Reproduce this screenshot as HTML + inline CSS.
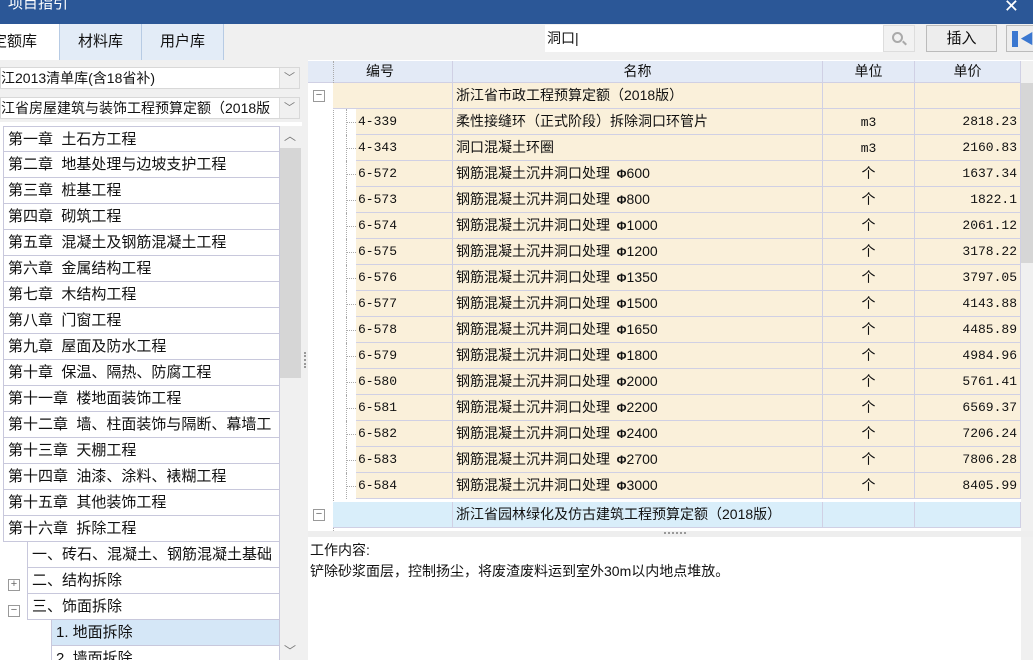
<!DOCTYPE html>
<html><head><meta charset="utf-8"><style>
*{box-sizing:border-box;margin:0;padding:0}
html{width:1033px;height:660px;overflow:hidden}
body{width:1033px;height:660px;overflow:hidden;background:#f0f0f0;position:relative;font-family:"Liberation Sans","Noto Sans CJK SC",sans-serif;font-size:14px;color:#111}
.a{position:absolute}
.title{left:0;top:0;width:1033px;height:24px;background:#2b5797;color:#fff;font-size:15px;overflow:hidden}
.tab{top:24px;height:36px;line-height:36px;text-align:center;font-size:15px;border-right:1px solid #b7cbe4}
.combo{left:0;width:300px;height:22px;background:#fff;border:1px solid #d8d8d8;line-height:20px;font-size:14px;white-space:nowrap;overflow:hidden}
.combo .dd{position:absolute;right:0;top:0;width:20px;height:20px;background:#f0f0f0;border-left:1px solid #ddd;text-align:center;color:#777;font-size:11px}
.li{left:3px;width:277px;height:26px;border:1px solid #c8c8dc;border-top:none;background:#fff;line-height:25px;padding-left:4px;font-size:15px;white-space:nowrap;overflow:hidden}
.row{left:0;width:1021px;height:26px}
.c{position:absolute;top:0;height:26px;border-right:1px solid #d0d0e4;border-bottom:1px solid #d0d0e4;line-height:25px;white-space:nowrap;overflow:hidden}
.mono{font-family:"Liberation Mono","Noto Sans CJK SC",monospace;font-size:13px}
.h{background:#e3eaf6;text-align:center;font-size:14px;height:22px;line-height:21px}
.pm{position:absolute;width:12px;height:12px;border:1px solid #999;background:#fff;font-size:11px;line-height:9px;text-align:center;color:#666}
</style></head><body>
<div class="a title"><span style="position:absolute;left:8px;top:-8px">项目指引</span><span style="position:absolute;right:14px;top:-4px;font-size:18px">✕</span></div>
<div class="a" style="left:-8px;top:24px;height:36px;line-height:36px;font-size:15px;background:#fff;width:68px;border-right:1px solid #b7cbe4">定额库</div>
<div class="a tab" style="left:60px;width:82px;background:#e3ecf7">材料库</div>
<div class="a tab" style="left:142px;width:82px;background:#e3ecf7">用户库</div>
<div class="a" style="left:545px;top:25px;width:338px;height:27px;background:#fff;line-height:26px;padding-left:2px;font-size:14px">洞口|</div>
<div class="a" style="left:883px;top:25px;width:32px;height:27px;background:#f2f2f2;border:1px solid #ddd"><div class="a" style="left:8px;top:6px;width:11px;height:11px;border:2px solid #aaa;border-radius:50%"></div><div class="a" style="left:18px;top:16px;width:5px;height:2px;background:#aaa;transform:rotate(45deg)"></div></div>
<div class="a" style="left:926px;top:25px;width:71px;height:27px;background:#ededed;border:1px solid #bbb;text-align:center;line-height:25px;font-size:15px">插入</div>
<div class="a" style="left:1006px;top:25px;width:30px;height:27px;background:#ededed;border:1px solid #bbb"><div class="a" style="left:5px;top:5px;width:6px;height:16px;background:#3a77d0"></div><div class="a" style="left:13px;top:3px;color:#3a77d0;font-size:14px">◀</div></div>

<div class="combo a" style="top:67px">江2013清单库(含18省补)<div class="dd">﹀</div></div>
<div class="combo a" style="top:97px">江省房屋建筑与装饰工程预算定额（2018版<div class="dd">﹀</div></div>
<div class="a" style="left:0;top:122px;width:302px;height:538px;background:#fff"></div>
<div class="a" style="left:280px;top:126px;width:22px;height:534px;background:#f0f0f0"></div>
<div class="a" style="left:280px;top:148px;width:21px;height:230px;background:#d6d6d6"></div>
<div class="a" style="left:284px;top:127px;color:#777;font-size:12px">︿</div>
<div class="a" style="left:284px;top:642px;color:#777;font-size:12px">﹀</div>
<div class="a" style="left:302px;top:60px;width:6px;height:600px;background:#f0f0f0"></div>
<div class="a" style="left:304px;top:352px;width:2px;height:16px;border-left:2px dotted #999"></div>

<div class="a li" style="top:126px;border-top:1px solid #c8c8dc">第一章&nbsp; 土石方工程</div>
<div class="a li" style="top:152px">第二章&nbsp; 地基处理与边坡支护工程</div>
<div class="a li" style="top:178px">第三章&nbsp; 桩基工程</div>
<div class="a li" style="top:204px">第四章&nbsp; 砌筑工程</div>
<div class="a li" style="top:230px">第五章&nbsp; 混凝土及钢筋混凝土工程</div>
<div class="a li" style="top:256px">第六章&nbsp; 金属结构工程</div>
<div class="a li" style="top:282px">第七章&nbsp; 木结构工程</div>
<div class="a li" style="top:308px">第八章&nbsp; 门窗工程</div>
<div class="a li" style="top:334px">第九章&nbsp; 屋面及防水工程</div>
<div class="a li" style="top:360px">第十章&nbsp; 保温、隔热、防腐工程</div>
<div class="a li" style="top:386px">第十一章&nbsp; 楼地面装饰工程</div>
<div class="a li" style="top:412px">第十二章&nbsp; 墙、柱面装饰与隔断、幕墙工</div>
<div class="a li" style="top:438px">第十三章&nbsp; 天棚工程</div>
<div class="a li" style="top:464px">第十四章&nbsp; 油漆、涂料、裱糊工程</div>
<div class="a li" style="top:490px">第十五章&nbsp; 其他装饰工程</div>
<div class="a li" style="top:516px">第十六章&nbsp; 拆除工程</div>
<div class="a li" style="top:542px;left:27px;width:253px">一、砖石、混凝土、钢筋混凝土基础</div>
<div class="a li" style="top:568px;left:27px;width:253px">二、结构拆除</div>
<div class="a li" style="top:594px;left:27px;width:253px">三、饰面拆除</div>
<div class="a li" style="top:620px;left:51px;width:229px;background:#d5e7f7">1. 地面拆除</div>
<div class="a li" style="top:646px;left:51px;width:229px">2. 墙面拆除</div>
<div class="pm" style="left:8px;top:579px">+</div>
<div class="pm" style="left:8px;top:605px">−</div>

<div class="a" style="left:308px;top:60px;width:725px;height:474px;background:#fff"></div>
<div class="a" id="g" style="left:308px;top:61px;width:725px;height:470px;overflow:hidden">
<div class="a row" style="top:0">
<div class="c h" style="left:0;width:145px">编号</div>
<div class="c h" style="left:145px;width:370px">名称</div>
<div class="c h" style="left:515px;width:92px">单位</div>
<div class="c h" style="left:607px;width:106px">单价</div>
</div>
<div class="a" style="left:713px;top:0;width:12px;height:470px;background:#f0f0f0"></div>
<div class="a" style="left:713px;top:22px;width:12px;height:180px;background:#d6d6d6"></div>
<div class="a" style="left:25px;top:0;border-left:1px dotted #aaa;height:470px"></div>
<div class="a row" style="top:22px">
<div class="pm" style="left:5px;top:7px">−</div>
<div class="c" style="left:25px;width:120px;background:#faf0da"></div>
<div class="c" style="left:145px;width:370px;background:#faf0da;padding-left:3px">浙江省市政工程预算定额（2018版）</div>
<div class="c" style="left:515px;width:92px;background:#faf0da"></div>
<div class="c" style="left:607px;width:106px;background:#faf0da"></div>
</div>
<div id="rows"></div>
<div class="a row" style="top:441px">
<div class="pm" style="left:5px;top:7px">−</div>
<div class="c" style="left:25px;width:120px;background:#d9eefa"></div>
<div class="c" style="left:145px;width:370px;background:#d9eefa;padding-left:3px">浙江省园林绿化及仿古建筑工程预算定额（2018版）</div>
<div class="c" style="left:515px;width:92px;background:#d9eefa"></div>
<div class="c" style="left:607px;width:106px;background:#d9eefa"></div>
</div>
</div>
<div class="a" style="left:308px;top:531px;width:725px;height:6px;background:#eee"></div>
<div class="a" style="left:664px;top:532px;width:22px;border-top:2px dotted #999"></div>
<div class="a" style="left:308px;top:537px;width:713px;height:123px;background:#fff;padding:3px 2px;font-size:14px;line-height:21px">工作内容:<br>铲除砂浆面层，控制扬尘，将废渣废料运到室外30m以内地点堆放。</div>
<div class="a" style="left:1021px;top:537px;width:12px;height:123px;background:#f0f0f0"></div>
<script>
var d=[["4-339","柔性接缝环（正式阶段）拆除洞口环管片","m3","2818.23"],["4-343","洞口混凝土环圈","m3","2160.83"],["6-572","钢筋混凝土沉井洞口处理 Φ600","个","1637.34"],["6-573","钢筋混凝土沉井洞口处理 Φ800","个","1822.1"],["6-574","钢筋混凝土沉井洞口处理 Φ1000","个","2061.12"],["6-575","钢筋混凝土沉井洞口处理 Φ1200","个","3178.22"],["6-576","钢筋混凝土沉井洞口处理 Φ1350","个","3797.05"],["6-577","钢筋混凝土沉井洞口处理 Φ1500","个","4143.88"],["6-578","钢筋混凝土沉井洞口处理 Φ1650","个","4485.89"],["6-579","钢筋混凝土沉井洞口处理 Φ1800","个","4984.96"],["6-580","钢筋混凝土沉井洞口处理 Φ2000","个","5761.41"],["6-581","钢筋混凝土沉井洞口处理 Φ2200","个","6569.37"],["6-582","钢筋混凝土沉井洞口处理 Φ2400","个","7206.24"],["6-583","钢筋混凝土沉井洞口处理 Φ2700","个","7806.28"],["6-584","钢筋混凝土沉井洞口处理 Φ3000","个","8405.99"]];
var h="";d.forEach(function(r,i){var t=48+i*26;var u=r[2]=="m3"?'<span class="mono">m3</span>':r[2];
h+='<div class="a row" style="top:'+t+'px"><div class="a" style="left:38px;top:13px;width:10px;border-top:1px dotted #aaa"></div><div class="a" style="left:38px;top:0;height:26px;border-left:1px dotted #aaa"></div>'+
'<div class="c mono" style="left:48px;width:97px;background:#faf0da;padding-left:2px">'+r[0]+'</div>'+
'<div class="c" style="left:145px;width:370px;background:#faf0da;padding-left:3px">'+r[1].replace(" Φ",'<span style="font-size:12px">&nbsp;&nbsp;<b>Φ</b></span>')+'</div>'+
'<div class="c" style="left:515px;width:92px;background:#faf0da;text-align:center">'+u+'</div>'+
'<div class="c mono" style="left:607px;width:106px;background:#faf0da;text-align:right;padding-right:3px">'+r[3]+'</div></div>';});
document.getElementById("rows").outerHTML=h;
</script>
</body></html>
